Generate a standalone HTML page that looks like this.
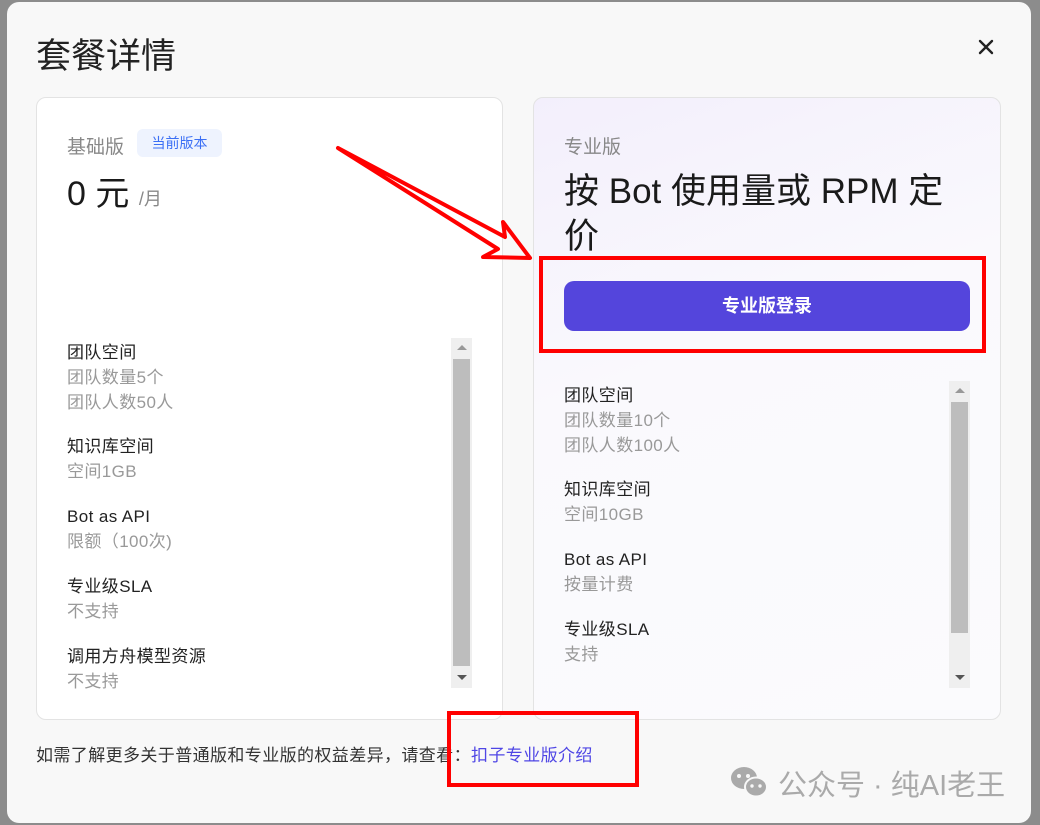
<!DOCTYPE html>
<html><head><meta charset="utf-8"><style>
*{margin:0;padding:0;box-sizing:border-box}
body{width:1040px;height:825px;background:#8c8c8c;font-family:"Liberation Sans","Noto Sans CJK SC",sans-serif;position:relative;overflow:hidden}
.modal{position:absolute;left:7px;top:2px;width:1024px;height:821px;background:#f8f8f8;border-radius:12px}
.abs{position:absolute}
.card{position:absolute;background:#fff;border:1px solid #e3e3e3;border-radius:10px}
.it{position:absolute;font-size:17px;letter-spacing:0.4px;line-height:25px;color:#222;white-space:nowrap}
.it span{display:block;color:#999}
.sb{position:absolute;width:21px;background:#efefef}
.th{position:absolute;left:2px;width:17px;background:#bdbdbd}
.up{position:absolute;left:6px;top:7px;border-left:5px solid transparent;border-right:5px solid transparent;border-bottom:5px solid #999}
.dn{position:absolute;left:6px;bottom:8px;border-left:5px solid transparent;border-right:5px solid transparent;border-top:5px solid #555}
</style></head><body>
<div class="modal"></div>
<div class="abs" style="left:36px;top:34px;font-size:35px;color:#222;line-height:46px">套餐详情</div>
<svg class="abs" style="left:978px;top:39px" width="16" height="16"><path d="M2 2L14 14M14 2L2 14" stroke="#222" stroke-width="2.4" stroke-linecap="round"/></svg>

<div class="card" style="left:36px;top:97px;width:467px;height:623px">
  <div class="abs" style="left:30px;top:34px;font-size:19px;color:#888">基础版</div>
  <div class="abs" style="left:100px;top:31px;width:85px;height:28px;background:#eef3fe;border-radius:6px;color:#3b6ff5;font-size:14px;line-height:28px;text-align:center">当前版本</div>
  <div class="abs" style="left:30px;top:74px;font-size:34px;color:#1a1a1a;line-height:44px">0 元 <span style="font-size:18px;color:#888">/月</span></div>
  <div class="it" style="left:30px;top:242px">团队空间<span>团队数量5个</span><span>团队人数50人</span></div>
  <div class="it" style="left:30px;top:336px">知识库空间<span>空间1GB</span></div>
  <div class="it" style="left:30px;top:406px">Bot as API<span>限额（100次)</span></div>
  <div class="it" style="left:30px;top:476px">专业级SLA<span>不支持</span></div>
  <div class="it" style="left:30px;top:546px">调用方舟模型资源<span>不支持</span></div>
  <div class="sb" style="left:414px;top:240px;height:350px"><div class="up"></div><div class="th" style="top:21px;height:307px"></div><div class="dn"></div></div>
</div>

<div class="card" style="left:533px;top:97px;width:468px;height:623px;background:linear-gradient(160deg,#f3effc 0%,#faf9fd 40%,#fbfbfd 100%)">
  <div class="abs" style="left:30px;top:34px;font-size:19px;color:#888">专业版</div>
  <div class="abs" style="left:30px;top:71px;width:388px;font-size:35px;color:#1a1a1a;line-height:45px">按 Bot 使用量或 RPM 定价</div>
  <div class="abs" style="left:30px;top:183px;width:406px;height:50px;background:#5445dc;border-radius:10px;color:#fff;font-size:18px;font-weight:bold;line-height:50px;text-align:center">专业版登录</div>
  <div class="it" style="left:30px;top:285px">团队空间<span>团队数量10个</span><span>团队人数100人</span></div>
  <div class="it" style="left:30px;top:379px">知识库空间<span>空间10GB</span></div>
  <div class="it" style="left:30px;top:449px">Bot as API<span>按量计费</span></div>
  <div class="it" style="left:30px;top:519px">专业级SLA<span>支持</span></div>
  <div class="sb" style="left:415px;top:283px;height:307px"><div class="up"></div><div class="th" style="top:21px;height:231px"></div><div class="dn"></div></div>
</div>

<div class="abs" style="left:36px;top:741px;font-size:17px;letter-spacing:0.4px;color:#333;white-space:nowrap">如需了解更多关于普通版和专业版的权益差异，请查看：<span style="color:#4f46e5">扣子专业版介绍</span></div>
<div class="abs" style="left:730px;top:762px;font-size:29px;color:#aaa;display:flex;align-items:center;white-space:nowrap">
<svg width="40" height="34" viewBox="0 0 40 34"><ellipse cx="14" cy="12" rx="13" ry="11" fill="#aaa"/><ellipse cx="26" cy="21" rx="11" ry="9.5" fill="#aaa" stroke="#f8f8f8" stroke-width="2"/><circle cx="9" cy="10" r="2" fill="#f8f8f8"/><circle cx="18" cy="10" r="2" fill="#f8f8f8"/><circle cx="22" cy="20" r="1.7" fill="#f8f8f8"/><circle cx="30" cy="20" r="1.7" fill="#f8f8f8"/></svg>
<span style="margin-left:8px">公众号 · 纯AI老王</span></div>

<svg class="abs" style="left:0;top:0" width="1040" height="825">
<polygon points="338,148 505,237 503,222 530,258 483,257 498,249" fill="none" stroke="#f00" stroke-width="4" stroke-linejoin="round"/>
<rect x="541" y="258" width="443" height="93" fill="none" stroke="#f00" stroke-width="4"/>
<rect x="449" y="713" width="188" height="72" fill="none" stroke="#f00" stroke-width="4"/>
</svg>
</body></html>
